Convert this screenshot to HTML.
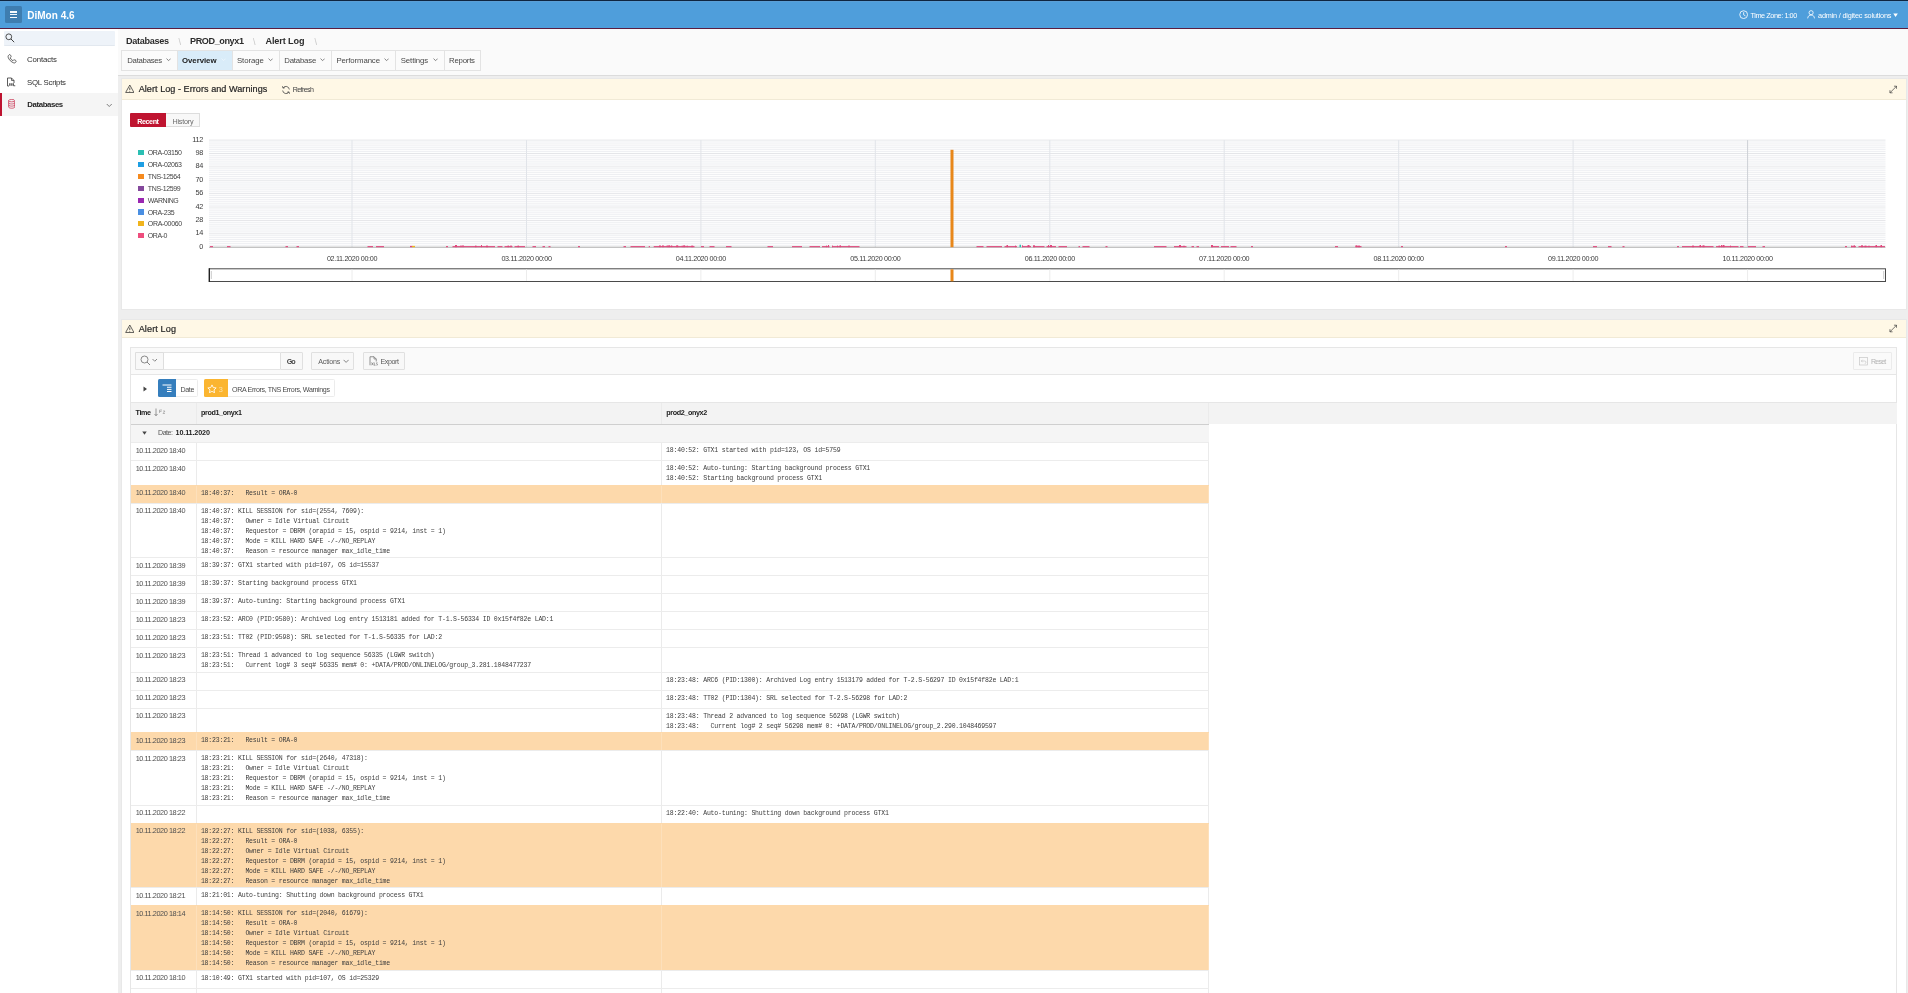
<!DOCTYPE html><html lang="en"><head><meta charset="utf-8"><title>DiMon 4.6 - Alert Log</title><style>
*{box-sizing:border-box;margin:0;padding:0}
html,body{width:1908px;height:993px;overflow:hidden;background:#eeeeee}
body{font-family:"Liberation Sans",sans-serif;font-size:8px;color:#404040;position:relative;will-change:transform}
.abs{position:absolute}
.t{position:absolute;white-space:nowrap;line-height:1}
#hdr{position:absolute;left:0;top:0;width:1908px;height:29px;background:#4f9edb;border-top:1px solid #0f2540;border-bottom:1px solid #5a1d40}
#hdr:before{content:'';position:absolute;left:0;top:0;width:100%;height:1px;background:#5b9fd6}
#burger{position:absolute;left:4.8px;top:4.8px;width:17.6px;height:17.6px;background:#3e7db0;border-radius:1.5px}
#burger i{position:absolute;left:5.2px;width:6.9px;height:1.5px;background:#f4f9fd}
#brand{left:27px;top:8.2px;font-size:10.6px;font-weight:bold;color:#fff;letter-spacing:-0.3px}
.hw{color:#fff;font-size:7.8px;top:9.6px;letter-spacing:-0.25px}
#side{position:absolute;left:0;top:28.5px;width:117.5px;height:965px;background:#fff}
#sbox{position:absolute;left:3.5px;top:2.5px;width:111.5px;height:14.5px;background:#eef3f9;border-radius:1px;border-bottom:1px solid #e2e8ef}
.nav{font-size:8.5px;color:#3a3a3a;letter-spacing:-0.35px}
#navsel{position:absolute;left:0;top:64.5px;width:117.5px;height:22.5px;background:#f5f5f5;border-left:2px solid #be1330}
#tbar{position:absolute;left:117.5px;top:28.5px;width:1791px;height:47.5px;background:#fafafa;border-bottom:1.5px solid #dcdcdc}
.bc{font-size:10.4px;font-weight:bold;color:#2c2c2c;top:36.2px;letter-spacing:-0.25px}
.bcs{font-size:9px;color:#c8c8c8;top:38px}
.tab{position:absolute;top:50px;height:21px;border:1px solid #e3e3e3;border-left:none;background:#fbfbfb;font-size:7.8px;color:#555;line-height:18.5px;padding-left:4.5px;white-space:nowrap;letter-spacing:-0.3px}
.tab.first{border-left:1px solid #e3e3e3}
.tab.act{background:#d9ecf9;color:#1a1a1a;font-weight:bold;letter-spacing:-0.35px}
.reg{position:absolute;left:120.6px;width:1786.5px;background:#fff;border:1px solid #e8e8e8}
.rh{position:absolute;left:0;top:0;width:100%;height:21px;background:#fff8e6;border-bottom:1px solid #f1ead6}
.rt{font-size:9.4px;color:#2e2e2e;top:5.2px;letter-spacing:-0.15px}
.btn{position:absolute;border:1px solid #e0e0e0;background:#f8f8f8;border-radius:1px;font-size:7.4px;color:#5a5a5a;white-space:nowrap;text-align:center}
.lg{font-size:6.9px;color:#4a4a4a;left:147.5px;letter-spacing:-0.15px}
.lgs{position:absolute;left:138.2px;width:5.4px;height:5.4px}
svg text{font-family:"Liberation Sans",sans-serif}
#irt{position:absolute;left:9px;top:28px;width:1766px;height:28px;background:#fafafa;border:1px solid #e6e6e6}
#irb{position:absolute;left:9px;top:55px;width:1766px;height:940px;background:#fff;border-left:1px solid #e6e6e6;border-right:1px solid #e6e6e6}
#th{position:absolute;left:10px;top:83.5px;width:1764px;height:21.5px;background:#f3f3f3;border-top:1px solid #e6e6e6;border-bottom:none}
.thc{font-size:7.4px;font-weight:bold;color:#222;top:7.2px;letter-spacing:-0.25px}
.vl{position:absolute;width:1px;background:#ebebeb}
#rows{position:absolute;left:10px;top:105px;width:1078.3px}
.row{position:relative;width:1078.3px;border-top:1px solid #ececec;background:#fff}
.row.hl{background:#fdd9ab;border-top-color:#fdd9ab}
.row.hl .vl{background:#fde0bb}
.row.grp{background:#f5f5f5;height:18px;border-top:1px solid #cfcfcf}
.tm{position:absolute;left:5px;top:5.2px;font-size:7.5px;color:#4a4a4a;letter-spacing:-0.42px;white-space:nowrap;line-height:1}
.c1,.c2{position:absolute;top:3.2px;font-family:"Liberation Mono",monospace;font-size:6.5px;letter-spacing:-0.192px;line-height:10.03px;color:#3c3c3c;white-space:pre}
.c1{left:70.4px}.c2{left:535.6px}
.h1{height:18px}.h2{height:24.5px}.h5{height:54.5px}.h6{height:64.5px}
</style></head><body>
<div id="hdr"><div id="burger"><i style="top:5.4px"></i><i style="top:8.1px"></i><i style="top:10.8px"></i></div>
<div id="f1" class="t" style="left:27.2px;top:10px;font-size:10.0px;letter-spacing:0.033px;font-weight:bold;color:#fff">DiMon 4.6</div>
<svg class="abs" style="left:1738.6px;top:8.8px" width="9.3" height="9.3" viewBox="0 0 10 10"><circle cx="5" cy="5" r="4.2" fill="none" stroke="#fff" stroke-width="0.9"/><path d="M5 2.4V5.2L6.9 6.3" fill="none" stroke="#fff" stroke-width="0.9"/></svg>
<div id="f2" class="t" style="left:1750.5px;top:11px;font-size:7.3px;letter-spacing:-0.434px;color:#fff">Time Zone: 1:00</div>
<svg class="abs" style="left:1806.7px;top:9.3px" width="8.200" height="9" viewBox="0 0 9 10"><circle cx="4.5" cy="3" r="2.3" fill="none" stroke="#fff" stroke-width="0.9"/><path d="M0.7 9.3C1 6.6 2.6 5.6 4.5 5.6S8 6.6 8.3 9.3" fill="none" stroke="#fff" stroke-width="0.9"/></svg>
<div id="f3" class="t" style="left:1818px;top:11px;font-size:7.3px;letter-spacing:-0.183px;color:#fff">admin / digitec solutions</div>
<svg class="abs" style="left:1893.2px;top:11.6px" width="5.500" height="4.700" viewBox="0 0 6 5"><path d="M0.3 0.5H5.3L2.8 4.2Z" fill="#fff"/></svg>
</div>
<div id="side"><div id="sbox"></div>
<svg class="abs" style="left:5.1px;top:4.7px" width="10" height="10" viewBox="0 0 10 10"><circle cx="3.8" cy="3.8" r="2.9" fill="none" stroke="#404040" stroke-width="0.9"/><path d="M5.9 5.9L9.2 9.2" stroke="#404040" stroke-width="1"/></svg>
<div id="navsel"></div>
<svg class="abs" style="left:6.5px;top:25.5px" width="10" height="10" viewBox="0 0 20 20"><path d="M4.2 1.6c1.2-.9 2.4-.3 3 .9l.9 2c.4 1 .1 1.8-.7 2.4l-1 .8c1 2.6 2.8 4.4 5.4 5.6l1-1.100c.7-.7 1.500-.9 2.400-.4l2 1c1.100.6 1.500 1.800.7 2.900l-.8 1.100c-.900 1.200-2.300 1.300-3.700.9C8.400 16 3.900 11.600 2.300 6.500 1.900 4.900 2.300 3.100 4.200 1.600z" fill="none" stroke="#404040" stroke-width="1.6"/></svg>
<div id="f4" class="t" style="left:27px;top:27.5px;font-size:7.8px;letter-spacing:-0.112px;color:#2e2e2e">Contacts</div>
<svg class="abs" style="left:5.7px;top:48px" width="10" height="10" viewBox="0 0 20 20"><path d="M3 18V2h8l5 5v5" fill="none" stroke="#404040" stroke-width="1.7"/><path d="M11 2v5h5" fill="none" stroke="#404040" stroke-width="1.5"/><path d="M3 18h3" stroke="#404040" stroke-width="1.7"/><rect x="6.500" y="12.500" width="2.500" height="5" fill="#404040"/><rect x="10.500" y="12.500" width="2.500" height="5" fill="#404040"/><path d="M15 12.500v5h3.500" fill="none" stroke="#404040" stroke-width="1.7"/></svg>
<div id="f5" class="t" style="left:27px;top:50.4px;font-size:7.8px;letter-spacing:-0.231px;color:#2e2e2e">SQL Scripts</div>
<svg class="abs" style="left:7.6px;top:70.6px" width="7.4" height="9.7" viewBox="0 0 16 21"><ellipse cx="8" cy="3.600" rx="6.600" ry="2.600" fill="none" stroke="#c2183a" stroke-width="1.400"/><path d="M1.400 3.600v13.800c0 1.400 3 2.600 6.600 2.600s6.600-1.200 6.600-2.600V3.600" fill="none" stroke="#c2183a" stroke-width="1.400"/><path d="M1.400 8.200c0 1.400 3 2.600 6.600 2.600s6.600-1.200 6.600-2.600M1.400 12.800c0 1.400 3 2.600 6.600 2.600s6.600-1.200 6.600-2.600" fill="none" stroke="#c2183a" stroke-width="1.400"/></svg>
<div id="f6" class="t" style="left:27.3px;top:72.7px;font-size:7.8px;letter-spacing:-0.389px;font-weight:bold;color:#1e1e1e">Databases</div>
<svg class="abs" style="left:105.5px;top:74px" width="6.500" height="4.500" viewBox="0 0 13 9"><path d="M1.500 2l5 5 5-5" fill="none" stroke="#555" stroke-width="1.500"/></svg>
</div>
<div id="tbar"></div>
<div id="f7" class="t" style="left:126px;top:36.9px;font-size:9.1px;letter-spacing:-0.312px;font-weight:bold;color:#2c2c2c">Databases</div>
<div id="f8" class="t" style="left:190px;top:36.9px;font-size:9.1px;letter-spacing:-0.403px;font-weight:bold;color:#2c2c2c">PROD_onyx1</div>
<div id="f9" class="t" style="left:265.5px;top:36.9px;font-size:9.1px;letter-spacing:-0.115px;font-weight:bold;color:#2c2c2c">Alert Log</div>
<div class="t bcs" style="left:178.5px">\</div>
<div class="t bcs" style="left:253px">\</div>
<div class="t bcs" style="left:314.5px">\</div>
<div class="tab first" style="left:121px;width:57px">
<div id="f10" class="t" style="left:5.25px;top:6.1px;font-size:7.8px;letter-spacing:-0.285px;color:#484848">Databases</div>
<svg class="abs" style="right:6.200px;top:7.200px" width="5.200" height="3.600" viewBox="0 0 10 7"><path d="M1 1.200l4 4 4-4" fill="none" stroke="#6a6a6a" stroke-width="1.600"/></svg>
</div>
<div class="tab act" style="left:178px;width:55px">
<div id="f11" class="t" style="left:4px;top:6.1px;font-size:7.8px;letter-spacing:-0.027px;font-weight:bold;color:#1a1a1a">Overview</div>
<svg class="abs" style="right:6.200px;top:7.200px" width="5.200" height="3.600" viewBox="0 0 10 7"><path d="M1 1.200l4 4 4-4" fill="none" stroke="#eef6fc" stroke-width="1.600"/></svg>
</div>
<div class="tab" style="left:233px;width:47px">
<div id="f12" class="t" style="left:4px;top:6.1px;font-size:7.8px;letter-spacing:-0.094px;color:#484848">Storage</div>
<svg class="abs" style="right:6.200px;top:7.200px" width="5.200" height="3.600" viewBox="0 0 10 7"><path d="M1 1.200l4 4 4-4" fill="none" stroke="#6a6a6a" stroke-width="1.600"/></svg>
</div>
<div class="tab" style="left:280px;width:52px">
<div id="f13" class="t" style="left:4.25px;top:6.1px;font-size:7.8px;letter-spacing:-0.199px;color:#484848">Database</div>
<svg class="abs" style="right:6.200px;top:7.200px" width="5.200" height="3.600" viewBox="0 0 10 7"><path d="M1 1.200l4 4 4-4" fill="none" stroke="#6a6a6a" stroke-width="1.600"/></svg>
</div>
<div class="tab" style="left:332px;width:64px">
<div id="f14" class="t" style="left:4.5px;top:6.1px;font-size:7.8px;letter-spacing:-0.114px;color:#484848">Performance</div>
<svg class="abs" style="right:6.200px;top:7.200px" width="5.200" height="3.600" viewBox="0 0 10 7"><path d="M1 1.200l4 4 4-4" fill="none" stroke="#6a6a6a" stroke-width="1.600"/></svg>
</div>
<div class="tab" style="left:396px;width:49px">
<div id="f15" class="t" style="left:4.75px;top:6.1px;font-size:7.8px;letter-spacing:-0.098px;color:#484848">Settings</div>
<svg class="abs" style="right:6.200px;top:7.200px" width="5.200" height="3.600" viewBox="0 0 10 7"><path d="M1 1.200l4 4 4-4" fill="none" stroke="#6a6a6a" stroke-width="1.600"/></svg>
</div>
<div class="tab" style="left:445px;width:36px">
<div id="f16" class="t" style="left:4px;top:6.1px;font-size:7.8px;letter-spacing:-0.219px;color:#484848">Reports</div>
</div>
<div class="reg" style="top:78px;height:232px"><div class="rh"></div></div>
<svg class="abs" style="left:124.8px;top:84.4px" width="9.600" height="9.600" viewBox="0 0 19 19"><path d="M9.500 2L17.700 16.800H1.300z" fill="none" stroke="#333" stroke-width="1.500" stroke-linejoin="round"/><path d="M9.500 7v5" stroke="#333" stroke-width="1.600"/><circle cx="9.500" cy="14.200" r="0.950" fill="#333"/></svg>
<div id="f17" class="t" style="left:138.7px;top:84.9px;font-size:9.1px;letter-spacing:0.036px;color:#262626;-webkit-text-stroke:0.2px #262626">Alert Log - Errors and Warnings</div>
<svg class="abs" style="left:280.600px;top:84.500px" width="10" height="10" viewBox="0 0 19 19"><path d="M15.800 8.500A6.500 6.500 0 0 0 4 5.500" fill="none" stroke="#444" stroke-width="1.500"/><path d="M3.200 10.500A6.500 6.500 0 0 0 15 13.500" fill="none" stroke="#444" stroke-width="1.500"/><path d="M2.800 2.200L3.700 6l3.800-.9M16.200 16.800L15.300 13l-3.800.9" fill="none" stroke="#444" stroke-width="1.400"/></svg>
<div id="f18" class="t" style="left:292.7px;top:87.1px;font-size:7.1px;letter-spacing:-0.607px;color:#444">Refresh</div>
<svg class="abs" style="left:1888.800px;top:84.7px" width="8.500" height="9" viewBox="0 0 18 18"><path d="M2 16L16 2M10.500 2H16v5.500M7.500 16H2v-5.500" fill="none" stroke="#333" stroke-width="1.400"/></svg>
<div class="abs" style="left:130px;top:113px;width:36px;height:14px;background:#bf1430;border-radius:1px 0 0 1px"></div>
<div id="f19" class="t" style="left:137.3px;top:117.5px;font-size:7.2px;letter-spacing:-0.454px;font-weight:bold;color:#fff">Recent</div>
<div class="abs" style="left:166px;top:113px;width:34px;height:14px;background:#f8f8f8;border:1px solid #dddddd;border-left:none"></div>
<div id="f20" class="t" style="left:172.5px;top:117.5px;font-size:7.2px;letter-spacing:-0.229px;color:#6a6a6a">History</div>
<div class="lgs" style="top:150.1px;background:#2bbfb3"></div>
<div id="f21" class="t" style="left:147.75px;top:149.2px;font-size:7.0px;letter-spacing:-0.340px;color:#444">ORA-03150</div>
<div class="lgs" style="top:162.1px;background:#1d9ee3"></div>
<div id="f22" class="t" style="left:147.75px;top:161.2px;font-size:7.0px;letter-spacing:-0.340px;color:#444">ORA-02063</div>
<div class="lgs" style="top:174.1px;background:#f58a1e"></div>
<div id="f23" class="t" style="left:147.75px;top:173.2px;font-size:7.0px;letter-spacing:-0.350px;color:#444">TNS-12564</div>
<div class="lgs" style="top:185.79999999999998px;background:#84489c"></div>
<div id="f24" class="t" style="left:147.75px;top:184.89999999999998px;font-size:7.0px;letter-spacing:-0.350px;color:#444">TNS-12599</div>
<div class="lgs" style="top:197.6px;background:#9a27b1"></div>
<div id="f25" class="t" style="left:147.75px;top:196.7px;font-size:7.0px;letter-spacing:-0.430px;color:#444">WARNING</div>
<div class="lgs" style="top:209.4px;background:#4a8fe2"></div>
<div id="f26" class="t" style="left:147.75px;top:208.5px;font-size:7.0px;letter-spacing:-0.365px;color:#444">ORA-235</div>
<div class="lgs" style="top:221.1px;background:#f0b41d"></div>
<div id="f27" class="t" style="left:147.75px;top:220.2px;font-size:7.0px;letter-spacing:-0.309px;color:#444">ORA-00060</div>
<div class="lgs" style="top:233.1px;background:#ee4d7d"></div>
<div id="f28" class="t" style="left:147.75px;top:232.2px;font-size:7.0px;letter-spacing:-0.427px;color:#444">ORA-0</div>
<svg class="abs" style="left:0;top:100px" width="1908" height="200" viewBox="0 100 1908 200"><line x1="209.0" x2="1885.5" y1="140.10" y2="140.10" stroke="#e5e6e9" stroke-width="1"/><line x1="209.0" x2="1885.5" y1="142.01" y2="142.01" stroke="#edeef1" stroke-width="0.95"/><line x1="209.0" x2="1885.5" y1="143.92" y2="143.92" stroke="#edeef1" stroke-width="0.95"/><line x1="209.0" x2="1885.5" y1="145.84" y2="145.84" stroke="#edeef1" stroke-width="0.95"/><line x1="209.0" x2="1885.5" y1="147.75" y2="147.75" stroke="#edeef1" stroke-width="0.95"/><line x1="209.0" x2="1885.5" y1="149.66" y2="149.66" stroke="#edeef1" stroke-width="0.95"/><line x1="209.0" x2="1885.5" y1="151.57" y2="151.57" stroke="#edeef1" stroke-width="0.95"/><line x1="209.0" x2="1885.5" y1="153.49" y2="153.49" stroke="#e5e6e9" stroke-width="1"/><line x1="209.0" x2="1885.5" y1="155.40" y2="155.40" stroke="#edeef1" stroke-width="0.95"/><line x1="209.0" x2="1885.5" y1="157.31" y2="157.31" stroke="#edeef1" stroke-width="0.95"/><line x1="209.0" x2="1885.5" y1="159.22" y2="159.22" stroke="#edeef1" stroke-width="0.95"/><line x1="209.0" x2="1885.5" y1="161.14" y2="161.14" stroke="#edeef1" stroke-width="0.95"/><line x1="209.0" x2="1885.5" y1="163.05" y2="163.05" stroke="#edeef1" stroke-width="0.95"/><line x1="209.0" x2="1885.5" y1="164.96" y2="164.96" stroke="#edeef1" stroke-width="0.95"/><line x1="209.0" x2="1885.5" y1="166.88" y2="166.88" stroke="#e5e6e9" stroke-width="1"/><line x1="209.0" x2="1885.5" y1="168.79" y2="168.79" stroke="#edeef1" stroke-width="0.95"/><line x1="209.0" x2="1885.5" y1="170.70" y2="170.70" stroke="#edeef1" stroke-width="0.95"/><line x1="209.0" x2="1885.5" y1="172.61" y2="172.61" stroke="#edeef1" stroke-width="0.95"/><line x1="209.0" x2="1885.5" y1="174.52" y2="174.52" stroke="#edeef1" stroke-width="0.95"/><line x1="209.0" x2="1885.5" y1="176.44" y2="176.44" stroke="#edeef1" stroke-width="0.95"/><line x1="209.0" x2="1885.5" y1="178.35" y2="178.35" stroke="#edeef1" stroke-width="0.95"/><line x1="209.0" x2="1885.5" y1="180.26" y2="180.26" stroke="#e5e6e9" stroke-width="1"/><line x1="209.0" x2="1885.5" y1="182.17" y2="182.17" stroke="#edeef1" stroke-width="0.95"/><line x1="209.0" x2="1885.5" y1="184.09" y2="184.09" stroke="#edeef1" stroke-width="0.95"/><line x1="209.0" x2="1885.5" y1="186.00" y2="186.00" stroke="#edeef1" stroke-width="0.95"/><line x1="209.0" x2="1885.5" y1="187.91" y2="187.91" stroke="#edeef1" stroke-width="0.95"/><line x1="209.0" x2="1885.5" y1="189.82" y2="189.82" stroke="#edeef1" stroke-width="0.95"/><line x1="209.0" x2="1885.5" y1="191.74" y2="191.74" stroke="#edeef1" stroke-width="0.95"/><line x1="209.0" x2="1885.5" y1="193.65" y2="193.65" stroke="#e5e6e9" stroke-width="1"/><line x1="209.0" x2="1885.5" y1="195.56" y2="195.56" stroke="#edeef1" stroke-width="0.95"/><line x1="209.0" x2="1885.5" y1="197.47" y2="197.47" stroke="#edeef1" stroke-width="0.95"/><line x1="209.0" x2="1885.5" y1="199.39" y2="199.39" stroke="#edeef1" stroke-width="0.95"/><line x1="209.0" x2="1885.5" y1="201.30" y2="201.30" stroke="#edeef1" stroke-width="0.95"/><line x1="209.0" x2="1885.5" y1="203.21" y2="203.21" stroke="#edeef1" stroke-width="0.95"/><line x1="209.0" x2="1885.5" y1="205.12" y2="205.12" stroke="#edeef1" stroke-width="0.95"/><line x1="209.0" x2="1885.5" y1="207.04" y2="207.04" stroke="#e5e6e9" stroke-width="1"/><line x1="209.0" x2="1885.5" y1="208.95" y2="208.95" stroke="#edeef1" stroke-width="0.95"/><line x1="209.0" x2="1885.5" y1="210.86" y2="210.86" stroke="#edeef1" stroke-width="0.95"/><line x1="209.0" x2="1885.5" y1="212.77" y2="212.77" stroke="#edeef1" stroke-width="0.95"/><line x1="209.0" x2="1885.5" y1="214.69" y2="214.69" stroke="#edeef1" stroke-width="0.95"/><line x1="209.0" x2="1885.5" y1="216.60" y2="216.60" stroke="#edeef1" stroke-width="0.95"/><line x1="209.0" x2="1885.5" y1="218.51" y2="218.51" stroke="#edeef1" stroke-width="0.95"/><line x1="209.0" x2="1885.5" y1="220.43" y2="220.43" stroke="#e5e6e9" stroke-width="1"/><line x1="209.0" x2="1885.5" y1="222.34" y2="222.34" stroke="#edeef1" stroke-width="0.95"/><line x1="209.0" x2="1885.5" y1="224.25" y2="224.25" stroke="#edeef1" stroke-width="0.95"/><line x1="209.0" x2="1885.5" y1="226.16" y2="226.16" stroke="#edeef1" stroke-width="0.95"/><line x1="209.0" x2="1885.5" y1="228.07" y2="228.07" stroke="#edeef1" stroke-width="0.95"/><line x1="209.0" x2="1885.5" y1="229.99" y2="229.99" stroke="#edeef1" stroke-width="0.95"/><line x1="209.0" x2="1885.5" y1="231.90" y2="231.90" stroke="#edeef1" stroke-width="0.95"/><line x1="209.0" x2="1885.5" y1="233.81" y2="233.81" stroke="#e5e6e9" stroke-width="1"/><line x1="209.0" x2="1885.5" y1="235.72" y2="235.72" stroke="#edeef1" stroke-width="0.95"/><line x1="209.0" x2="1885.5" y1="237.64" y2="237.64" stroke="#edeef1" stroke-width="0.95"/><line x1="209.0" x2="1885.5" y1="239.55" y2="239.55" stroke="#edeef1" stroke-width="0.95"/><line x1="209.0" x2="1885.5" y1="241.46" y2="241.46" stroke="#edeef1" stroke-width="0.95"/><line x1="209.0" x2="1885.5" y1="243.38" y2="243.38" stroke="#edeef1" stroke-width="0.95"/><line x1="209.0" x2="1885.5" y1="245.29" y2="245.29" stroke="#edeef1" stroke-width="0.95"/><line x1="352.0" x2="352.0" y1="140.1" y2="247.2" stroke="#e1e4e9" stroke-width="1"/><line x1="526.5" x2="526.5" y1="140.1" y2="247.2" stroke="#e1e4e9" stroke-width="1"/><line x1="700.9" x2="700.9" y1="140.1" y2="247.2" stroke="#e1e4e9" stroke-width="1"/><line x1="875.3" x2="875.3" y1="140.1" y2="247.2" stroke="#e1e4e9" stroke-width="1"/><line x1="1049.8" x2="1049.8" y1="140.1" y2="247.2" stroke="#e1e4e9" stroke-width="1"/><line x1="1224.2" x2="1224.2" y1="140.1" y2="247.2" stroke="#e1e4e9" stroke-width="1"/><line x1="1398.7" x2="1398.7" y1="140.1" y2="247.2" stroke="#e1e4e9" stroke-width="1"/><line x1="1573.1" x2="1573.1" y1="140.1" y2="247.2" stroke="#e1e4e9" stroke-width="1"/><line x1="1747.6" x2="1747.6" y1="140.1" y2="247.2" stroke="#cdd0d5" stroke-width="1"/><line x1="209.0" x2="1885.5" y1="247.2" y2="247.2" stroke="#a9a9a9" stroke-width="1"/><text x="203.200" y="141.6" text-anchor="end" font-size="7.300" fill="#3c3c3c" letter-spacing="-0.200">112</text><text x="203.200" y="155.0" text-anchor="end" font-size="7.300" fill="#3c3c3c" letter-spacing="-0.200">98</text><text x="203.200" y="168.4" text-anchor="end" font-size="7.300" fill="#3c3c3c" letter-spacing="-0.200">84</text><text x="203.200" y="181.8" text-anchor="end" font-size="7.300" fill="#3c3c3c" letter-spacing="-0.200">70</text><text x="203.200" y="195.1" text-anchor="end" font-size="7.300" fill="#3c3c3c" letter-spacing="-0.200">56</text><text x="203.200" y="208.5" text-anchor="end" font-size="7.300" fill="#3c3c3c" letter-spacing="-0.200">42</text><text x="203.200" y="221.9" text-anchor="end" font-size="7.300" fill="#3c3c3c" letter-spacing="-0.200">28</text><text x="203.200" y="235.3" text-anchor="end" font-size="7.300" fill="#3c3c3c" letter-spacing="-0.200">14</text><text x="203.200" y="248.7" text-anchor="end" font-size="7.300" fill="#3c3c3c" letter-spacing="-0.200">0</text><text x="352.0" y="260.500" text-anchor="middle" font-size="7.200" fill="#3c3c3c" letter-spacing="-0.330">02.11.2020 00:00</text><text x="526.5" y="260.500" text-anchor="middle" font-size="7.200" fill="#3c3c3c" letter-spacing="-0.330">03.11.2020 00:00</text><text x="700.9" y="260.500" text-anchor="middle" font-size="7.200" fill="#3c3c3c" letter-spacing="-0.330">04.11.2020 00:00</text><text x="875.3" y="260.500" text-anchor="middle" font-size="7.200" fill="#3c3c3c" letter-spacing="-0.330">05.11.2020 00:00</text><text x="1049.8" y="260.500" text-anchor="middle" font-size="7.200" fill="#3c3c3c" letter-spacing="-0.330">06.11.2020 00:00</text><text x="1224.2" y="260.500" text-anchor="middle" font-size="7.200" fill="#3c3c3c" letter-spacing="-0.330">07.11.2020 00:00</text><text x="1398.7" y="260.500" text-anchor="middle" font-size="7.200" fill="#3c3c3c" letter-spacing="-0.330">08.11.2020 00:00</text><text x="1573.1" y="260.500" text-anchor="middle" font-size="7.200" fill="#3c3c3c" letter-spacing="-0.330">09.11.2020 00:00</text><text x="1747.6" y="260.500" text-anchor="middle" font-size="7.200" fill="#3c3c3c" letter-spacing="-0.330">10.11.2020 00:00</text><rect x="210" y="246.10" width="3.0" height="1.100" fill="#e0487c"/><rect x="227" y="246.10" width="3.5" height="1.100" fill="#e0487c"/><rect x="285.5" y="246.10" width="2.5" height="1.100" fill="#e0487c"/><rect x="296.5" y="246.10" width="2.5" height="1.100" fill="#e0487c"/><rect x="367.5" y="246.10" width="5.5" height="1.100" fill="#e0487c"/><rect x="376" y="246.10" width="8.0" height="1.100" fill="#e0487c"/><rect x="446" y="246.10" width="2.0" height="1.100" fill="#e0487c"/><rect x="452.5" y="246.10" width="42.5" height="1.100" fill="#e0487c"/><rect x="455.0" y="245.00" width="2" height="2.2" fill="#e0487c"/><rect x="460.5" y="245.30" width="1" height="1.9" fill="#e0487c"/><rect x="462.5" y="245.00" width="1" height="2.2" fill="#e0487c"/><rect x="475.0" y="245.60" width="1.5" height="1.6" fill="#e0487c"/><rect x="481.0" y="245.00" width="1" height="2.2" fill="#e0487c"/><rect x="486.0" y="245.60" width="2" height="1.6" fill="#e0487c"/><rect x="497.5" y="246.10" width="5.0" height="1.100" fill="#e0487c"/><rect x="504.5" y="246.10" width="8.0" height="1.100" fill="#e0487c"/><rect x="507.5" y="245.60" width="1.5" height="1.6" fill="#e0487c"/><rect x="510.5" y="245.30" width="1" height="1.9" fill="#e0487c"/><rect x="514.5" y="246.10" width="10.5" height="1.100" fill="#e0487c"/><rect x="517.5" y="245.60" width="1.5" height="1.6" fill="#e0487c"/><rect x="532.5" y="246.10" width="3.5" height="1.100" fill="#e0487c"/><rect x="542.5" y="246.10" width="2.5" height="1.100" fill="#e0487c"/><rect x="548.5" y="246.10" width="2.0" height="1.100" fill="#e0487c"/><rect x="578" y="246.10" width="2.0" height="1.100" fill="#e0487c"/><rect x="623.5" y="246.10" width="2.5" height="1.100" fill="#e0487c"/><rect x="630.5" y="246.10" width="14.5" height="1.100" fill="#e0487c"/><rect x="648.7" y="246.10" width="1.3" height="1.100" fill="#e0487c"/><rect x="653.7" y="246.10" width="40.8" height="1.100" fill="#e0487c"/><rect x="659.2" y="245.30" width="1.5" height="1.9" fill="#e0487c"/><rect x="662.2" y="245.30" width="1.5" height="1.9" fill="#e0487c"/><rect x="666.7" y="245.30" width="1" height="1.9" fill="#e0487c"/><rect x="668.2" y="245.30" width="2" height="1.9" fill="#e0487c"/><rect x="671.2" y="245.30" width="1" height="1.9" fill="#e0487c"/><rect x="676.2" y="245.30" width="2" height="1.9" fill="#e0487c"/><rect x="681.7" y="245.60" width="1" height="1.6" fill="#e0487c"/><rect x="683.2" y="245.30" width="2" height="1.9" fill="#e0487c"/><rect x="686.7" y="245.60" width="1" height="1.6" fill="#e0487c"/><rect x="691.2" y="245.60" width="2" height="1.6" fill="#e0487c"/><rect x="701" y="246.10" width="3.0" height="1.100" fill="#e0487c"/><rect x="709.5" y="246.10" width="5.0" height="1.100" fill="#e0487c"/><rect x="726" y="246.10" width="5.5" height="1.100" fill="#e0487c"/><rect x="767.5" y="246.10" width="5.5" height="1.100" fill="#e0487c"/><rect x="792" y="246.10" width="10.0" height="1.100" fill="#e0487c"/><rect x="809.5" y="246.10" width="10.5" height="1.100" fill="#e0487c"/><rect x="822" y="246.10" width="7.5" height="1.100" fill="#e0487c"/><rect x="826.0" y="245.60" width="1" height="1.6" fill="#e0487c"/><rect x="828.0" y="245.00" width="1" height="2.2" fill="#e0487c"/><rect x="832" y="246.10" width="27.5" height="1.100" fill="#e0487c"/><rect x="832.0" y="245.60" width="1" height="1.6" fill="#e0487c"/><rect x="837.0" y="245.60" width="1" height="1.6" fill="#e0487c"/><rect x="839.5" y="245.30" width="1.5" height="1.9" fill="#e0487c"/><rect x="848.5" y="245.30" width="1" height="1.9" fill="#e0487c"/><rect x="976.5" y="246.10" width="7.0" height="1.100" fill="#e0487c"/><rect x="986.5" y="246.10" width="15.5" height="1.100" fill="#e0487c"/><rect x="1004.5" y="246.10" width="12.5" height="1.100" fill="#e0487c"/><rect x="1006.5" y="245.00" width="1.5" height="2.2" fill="#e0487c"/><rect x="1015.0" y="245.60" width="1" height="1.6" fill="#e0487c"/><rect x="1022" y="246.10" width="9.0" height="1.100" fill="#e0487c"/><rect x="1022.0" y="245.30" width="1" height="1.9" fill="#e0487c"/><rect x="1027.5" y="245.00" width="2" height="2.2" fill="#e0487c"/><rect x="1033" y="246.10" width="11.5" height="1.100" fill="#e0487c"/><rect x="1033.0" y="245.30" width="2" height="1.9" fill="#e0487c"/><rect x="1046.5" y="246.10" width="9.5" height="1.100" fill="#e0487c"/><rect x="1048.0" y="245.00" width="1" height="2.2" fill="#e0487c"/><rect x="1050.0" y="245.00" width="2" height="2.2" fill="#e0487c"/><rect x="1058.5" y="246.10" width="8.5" height="1.100" fill="#e0487c"/><rect x="1078.5" y="246.10" width="1.5" height="1.100" fill="#e0487c"/><rect x="1082.5" y="246.10" width="7.0" height="1.100" fill="#e0487c"/><rect x="1105.5" y="246.10" width="2.0" height="1.100" fill="#e0487c"/><rect x="1154" y="246.10" width="12.5" height="1.100" fill="#e0487c"/><rect x="1174" y="246.10" width="12.5" height="1.100" fill="#e0487c"/><rect x="1179.0" y="245.00" width="2" height="2.2" fill="#e0487c"/><rect x="1183.5" y="245.60" width="1" height="1.6" fill="#e0487c"/><rect x="1191.5" y="246.10" width="2.5" height="1.100" fill="#e0487c"/><rect x="1196.5" y="246.10" width="2.5" height="1.100" fill="#e0487c"/><rect x="1211" y="246.10" width="8.0" height="1.100" fill="#e0487c"/><rect x="1211.0" y="245.00" width="2" height="2.2" fill="#e0487c"/><rect x="1221" y="246.10" width="8.0" height="1.100" fill="#e0487c"/><rect x="1230.5" y="246.10" width="6.0" height="1.100" fill="#e0487c"/><rect x="1251" y="246.10" width="2.0" height="1.100" fill="#e0487c"/><rect x="1335" y="246.10" width="3.0" height="1.100" fill="#e0487c"/><rect x="1355.5" y="246.10" width="6.0" height="1.100" fill="#e0487c"/><rect x="1355.5" y="245.30" width="2" height="1.9" fill="#e0487c"/><rect x="1358.0" y="245.60" width="2" height="1.6" fill="#e0487c"/><rect x="1401" y="246.10" width="2.0" height="1.100" fill="#e0487c"/><rect x="1505" y="246.10" width="2.0" height="1.100" fill="#e0487c"/><rect x="1593" y="246.10" width="4.0" height="1.100" fill="#e0487c"/><rect x="1608" y="246.10" width="3.5" height="1.100" fill="#e0487c"/><rect x="1622.5" y="246.10" width="2.0" height="1.100" fill="#e0487c"/><rect x="1677" y="246.10" width="2.0" height="1.100" fill="#e0487c"/><rect x="1682" y="246.10" width="31.5" height="1.100" fill="#e0487c"/><rect x="1692.0" y="245.60" width="2" height="1.6" fill="#e0487c"/><rect x="1699.5" y="245.00" width="1.5" height="2.2" fill="#e0487c"/><rect x="1702.5" y="245.30" width="2" height="1.9" fill="#e0487c"/><rect x="1716" y="246.10" width="22.5" height="1.100" fill="#e0487c"/><rect x="1718.5" y="245.60" width="1.5" height="1.6" fill="#e0487c"/><rect x="1721.0" y="245.00" width="1.5" height="2.2" fill="#e0487c"/><rect x="1723.0" y="245.00" width="1.5" height="2.2" fill="#e0487c"/><rect x="1730.0" y="245.60" width="1" height="1.6" fill="#e0487c"/><rect x="1740" y="246.10" width="3.5" height="1.100" fill="#e0487c"/><rect x="1748" y="246.10" width="8.0" height="1.100" fill="#e0487c"/><rect x="1762.5" y="246.10" width="2.5" height="1.100" fill="#e0487c"/><rect x="1845" y="246.10" width="2.0" height="1.100" fill="#e0487c"/><rect x="1851" y="246.10" width="5.0" height="1.100" fill="#e0487c"/><rect x="1851.0" y="245.60" width="1.5" height="1.6" fill="#e0487c"/><rect x="1853.5" y="245.30" width="1.5" height="1.9" fill="#e0487c"/><rect x="1858.5" y="246.10" width="26.5" height="1.100" fill="#e0487c"/><rect x="1861.0" y="245.30" width="2" height="1.9" fill="#e0487c"/><rect x="1864.5" y="245.60" width="2" height="1.6" fill="#e0487c"/><rect x="1868.5" y="245.60" width="1" height="1.6" fill="#e0487c"/><rect x="1875.5" y="245.00" width="1.5" height="2.2" fill="#e0487c"/><rect x="1880.5" y="245.00" width="1.5" height="2.2" fill="#e0487c"/><rect x="410" y="245.89999999999998" width="2.500" height="1.300" fill="#e0487c"/><rect x="412" y="245.89999999999998" width="3" height="1.300" fill="#f0b41d"/><rect x="1019.500" y="244.7" width="1.500" height="2.500" fill="#2bbfb3"/><rect x="950.500" y="149.800" width="3" height="97.4" fill="#e8871a"/><rect x="209.500" y="268.800" width="1676" height="12.700" fill="#fff" stroke="#4a4a4a" stroke-width="1"/><line x1="209.300" x2="209.300" y1="268.300" y2="282" stroke="#222" stroke-width="1.400"/><line x1="352.0" x2="352.0" y1="269.500" y2="280.800" stroke="#ececec" stroke-width="1"/><line x1="526.5" x2="526.5" y1="269.500" y2="280.800" stroke="#ececec" stroke-width="1"/><line x1="700.9" x2="700.9" y1="269.500" y2="280.800" stroke="#ececec" stroke-width="1"/><line x1="875.3" x2="875.3" y1="269.500" y2="280.800" stroke="#ececec" stroke-width="1"/><line x1="1049.8" x2="1049.8" y1="269.500" y2="280.800" stroke="#ececec" stroke-width="1"/><line x1="1224.2" x2="1224.2" y1="269.500" y2="280.800" stroke="#ececec" stroke-width="1"/><line x1="1398.7" x2="1398.7" y1="269.500" y2="280.800" stroke="#ececec" stroke-width="1"/><line x1="1573.1" x2="1573.1" y1="269.500" y2="280.800" stroke="#ececec" stroke-width="1"/><line x1="1747.6" x2="1747.6" y1="269.500" y2="280.800" stroke="#ececec" stroke-width="1"/><rect x="950.500" y="269.300" width="3" height="12" fill="#e8871a"/><line x1="211.300" x2="211.300" y1="271" y2="279" stroke="#bbb" stroke-width="0.800"/><line x1="1883.700" x2="1883.700" y1="271" y2="279" stroke="#bbb" stroke-width="0.800"/></svg>
<div class="reg" style="top:318.5px;height:700px"><div class="rh" style="height:18.600px"></div></div>
<svg class="abs" style="left:124.8px;top:323.6px" width="9.600" height="9.600" viewBox="0 0 19 19"><path d="M9.500 2L17.700 16.800H1.300z" fill="none" stroke="#333" stroke-width="1.500" stroke-linejoin="round"/><path d="M9.500 7v5" stroke="#333" stroke-width="1.600"/><circle cx="9.500" cy="14.200" r="0.950" fill="#333"/></svg>
<div id="f29" class="t" style="left:138.7px;top:324.7px;font-size:9.1px;letter-spacing:0.112px;color:#262626;-webkit-text-stroke:0.2px #262626">Alert Log</div>
<svg class="abs" style="left:1888.800px;top:323.7px" width="8.500" height="9" viewBox="0 0 18 18"><path d="M2 16L16 2M10.500 2H16v5.500M7.500 16H2v-5.500" fill="none" stroke="#333" stroke-width="1.400"/></svg>
<div id="irt" style="left:130.200px;top:347px;width:1767.3px;height:28px"></div>
<div id="irb" style="left:130.200px;top:375px;width:1767.3px;height:640px"></div>
<div class="abs" style="left:135px;top:352.100px;width:146px;height:17.700px;background:#fff;border:1px solid #e4e4e4;border-radius:1px"></div>
<div class="abs" style="left:135px;top:352.100px;width:28.800px;height:17.700px;background:#f8f8f8;border:1px solid #dedede;border-radius:1px 0 0 1px"></div>
<svg class="abs" style="left:139.800px;top:355px" width="19" height="11" viewBox="0 0 38 22"><circle cx="9" cy="9" r="7" fill="none" stroke="#666" stroke-width="1.500"/><path d="M14 14l6 6" stroke="#666" stroke-width="1.600"/><path d="M25 8l4.500 4.500L34 8" fill="none" stroke="#666" stroke-width="1.500"/></svg>
<div class="btn" style="left:280px;top:352.100px;width:22.500px;height:17.700px;line-height:16px;font-weight:bold;color:#444;letter-spacing:-0.200px"></div>
<div id="f30" class="t" style="left:286.8px;top:357.6px;font-size:7.2px;letter-spacing:-1.184px;font-weight:bold;color:#444">Go</div>
<div class="btn" style="left:311px;top:352.100px;width:42.500px;height:17.700px;line-height:16px;text-align:left;padding-left:6.500px;letter-spacing:-0.350px"><svg class="abs" style="left:30.800px;top:5.700px" width="6.200" height="4.500" viewBox="0 0 11 8"><path d="M1 1.500l4.500 4.500L10 1.500" fill="none" stroke="#666" stroke-width="1.400"/></svg></div>
<div id="f31" class="t" style="left:318.3px;top:359.1px;font-size:7.1px;letter-spacing:-0.211px;color:#5a5a5a">Actions</div>
<div class="btn" style="left:363.200px;top:352.100px;width:42.300px;height:17.700px;line-height:16px;text-align:left;padding-left:16.500px;letter-spacing:-0.350px"><svg class="abs" style="left:5px;top:2.700px" width="9" height="10" viewBox="0 0 18 20"><path d="M2 18.500V1.500h8l4.500 4.500v5" fill="none" stroke="#666" stroke-width="1.400"/><path d="M10 1.500v4.500h4.500" fill="none" stroke="#666" stroke-width="1.200"/><path d="M5 13l3.500 5.500M8.500 13L5 18.500M10.500 13v5.500h2.500M17 13.500c-2.500-1-3 1.500-1 2.200s1.500 3.500-1.500 2.300" fill="none" stroke="#666" stroke-width="1.200"/></svg></div>
<div id="f32" class="t" style="left:380.5px;top:359.1px;font-size:7.1px;letter-spacing:-0.403px;color:#5a5a5a">Export</div>
<div class="btn" style="left:1853px;top:352.300px;width:38.500px;height:17.500px;line-height:16px;text-align:left;padding-left:17px;color:#c4c4c4;border-color:#ebebeb;background:#fafafa;letter-spacing:-0.350px"><svg class="abs" style="left:5px;top:4px" width="9" height="8.500" viewBox="0 0 18 17"><rect x="1" y="1" width="16" height="15" fill="none" stroke="#c4c4c4" stroke-width="1.300"/><path d="M4.500 8h7a2.500 2.500 0 0 1 0 5M7 5.500L4.500 8 7 10.500" fill="none" stroke="#c4c4c4" stroke-width="1.300"/></svg></div>
<div id="f33" class="t" style="left:1870.9px;top:359.1px;font-size:7.1px;letter-spacing:-0.783px;color:#b4b4b4">Reset</div>
<svg class="abs" style="left:142.700px;top:385.500px" width="4.500" height="6" viewBox="0 0 9 12"><path d="M1 1l7 5-7 5z" fill="#444"/></svg>
<div class="abs" style="left:158px;top:379.200px;width:40.200px;height:18px;border:1px solid #ececec;border-radius:1.500px;background:#fff"></div>
<div class="abs" style="left:158px;top:379.200px;width:18px;height:18px;background:#357ebd;border-radius:1.500px 0 0 1.500px"></div>
<svg class="abs" style="left:162px;top:384.300px" width="10" height="8.500" viewBox="0 0 20 17"><path d="M1 2h18M10 6.500h9M10 10.800h9M10 15h9" stroke="#fff" stroke-width="2"/></svg>
<div id="f34" class="t" style="left:180.6px;top:386.6px;font-size:7.1px;letter-spacing:-0.395px;color:#4a4a4a">Date</div>
<div class="abs" style="left:203.500px;top:379.200px;width:131px;height:18px;border:1px solid #ececec;border-radius:1.500px;background:#fff"></div>
<div class="abs" style="left:203.500px;top:379.200px;width:24px;height:18px;background:#fbb530;border-radius:1.500px 0 0 1.500px"></div>
<svg class="abs" style="left:206.500px;top:383.500px" width="10" height="9.500" viewBox="0 0 20 19"><path d="M10 1.800l2.500 5.300 5.800.7-4.300 4 1.100 5.700L10 14.700l-5.100 2.800L6 11.800l-4.300-4 5.800-.7z" fill="none" stroke="#fff" stroke-width="1.700" stroke-linejoin="round"/></svg>
<div class="t" style="left:218.700px;top:386.400px;font-size:7.300px;color:#fde2a8">3</div>
<div id="f35" class="t" style="left:232px;top:386.6px;font-size:7.1px;letter-spacing:-0.361px;color:#4a4a4a">ORA Errors, TNS Errors, Warnings</div>
<div id="th" style="left:130.500px;top:402px;width:1766.5px;height:22px"></div>
<div id="f36" class="t" style="left:135.5px;top:408.7px;font-size:7.2px;letter-spacing:-0.385px;font-weight:bold;color:#222">Time</div>
<svg class="abs" style="left:153.500px;top:407.500px" width="12" height="9" viewBox="0 0 24 18"><path d="M4 1v14M1 12l3 3.500L7 12" fill="none" stroke="#666" stroke-width="1.300"/><path d="M11 4h5M11 4v6M11 7h4M18 6h4l-4 5h4" fill="none" stroke="#888" stroke-width="1.100"/></svg>
<div id="f37" class="t" style="left:201px;top:408.7px;font-size:7.2px;letter-spacing:-0.375px;font-weight:bold;color:#222">prod1_onyx1</div>
<div id="f38" class="t" style="left:666.2px;top:408.7px;font-size:7.2px;letter-spacing:-0.375px;font-weight:bold;color:#222">prod2_onyx2</div>
<div class="vl" style="left:196px;top:403px;height:21px"></div>
<div class="vl" style="left:661px;top:403px;height:21px"></div>
<div class="vl" style="left:1208px;top:403px;height:21px"></div>
<div id="rows" style="left:130.500px;top:424px">
<div class="row grp"><svg class="abs" style="left:11.500px;top:6px" width="5" height="4" viewBox="0 0 10 8"><path d="M0.500 0.800h9L5 7.500z" fill="#444"/></svg><div id="f39" class="t" style="left:27.5px;top:5.4px;font-size:7.1px;letter-spacing:-0.492px;color:#555">Date:</div><div id="f40" class="t" style="left:45px;top:4.2px;font-size:7.2px;letter-spacing:-0.120px;font-weight:bold;color:#222">10.11.2020</div></div>
<div class="row h1"><div id="f41" class="t" style="left:5.2px;top:3.9px;font-size:7.3px;letter-spacing:-0.432px;color:#505050">10.11.2020 18:40</div>
<div class="c2">18:40:52: GTX1 started with pid=123, OS id=5759</div>
<div class="vl" style="left:65.500px;top:0;height:100%"></div><div class="vl" style="left:530.500px;top:0;height:100%"></div><div class="vl" style="left:1077.800px;top:0;height:100%"></div></div>
<div class="row h2"><div id="f42" class="t" style="left:5.2px;top:3.9px;font-size:7.3px;letter-spacing:-0.432px;color:#505050">10.11.2020 18:40</div>
<div class="c2">18:40:52: Auto-tuning: Starting background process GTX1
18:40:52: Starting background process GTX1</div>
<div class="vl" style="left:65.500px;top:0;height:100%"></div><div class="vl" style="left:530.500px;top:0;height:100%"></div><div class="vl" style="left:1077.800px;top:0;height:100%"></div></div>
<div class="row h1 hl"><div id="f43" class="t" style="left:5.2px;top:3.9px;font-size:7.3px;letter-spacing:-0.432px;color:#505050">10.11.2020 18:40</div>
<div class="c1">18:40:37:   Result = ORA-0</div>
<div class="vl" style="left:65.500px;top:0;height:100%"></div><div class="vl" style="left:530.500px;top:0;height:100%"></div><div class="vl" style="left:1077.800px;top:0;height:100%"></div></div>
<div class="row h5"><div id="f44" class="t" style="left:5.2px;top:3.9px;font-size:7.3px;letter-spacing:-0.432px;color:#505050">10.11.2020 18:40</div>
<div class="c1">18:40:37: KILL SESSION for sid=(2554, 7609):
18:40:37:   Owner = Idle Virtual Circuit
18:40:37:   Requestor = DBRM (orapid = 15, ospid = 9214, inst = 1)
18:40:37:   Mode = KILL HARD SAFE -/-/NO_REPLAY
18:40:37:   Reason = resource manager max_idle_time</div>
<div class="vl" style="left:65.500px;top:0;height:100%"></div><div class="vl" style="left:530.500px;top:0;height:100%"></div><div class="vl" style="left:1077.800px;top:0;height:100%"></div></div>
<div class="row h1"><div id="f45" class="t" style="left:5.2px;top:3.9px;font-size:7.3px;letter-spacing:-0.432px;color:#505050">10.11.2020 18:39</div>
<div class="c1">18:39:37: GTX1 started with pid=107, OS id=15537</div>
<div class="vl" style="left:65.500px;top:0;height:100%"></div><div class="vl" style="left:530.500px;top:0;height:100%"></div><div class="vl" style="left:1077.800px;top:0;height:100%"></div></div>
<div class="row h1"><div id="f46" class="t" style="left:5.2px;top:3.9px;font-size:7.3px;letter-spacing:-0.432px;color:#505050">10.11.2020 18:39</div>
<div class="c1">18:39:37: Starting background process GTX1</div>
<div class="vl" style="left:65.500px;top:0;height:100%"></div><div class="vl" style="left:530.500px;top:0;height:100%"></div><div class="vl" style="left:1077.800px;top:0;height:100%"></div></div>
<div class="row h1"><div id="f47" class="t" style="left:5.2px;top:3.9px;font-size:7.3px;letter-spacing:-0.432px;color:#505050">10.11.2020 18:39</div>
<div class="c1">18:39:37: Auto-tuning: Starting background process GTX1</div>
<div class="vl" style="left:65.500px;top:0;height:100%"></div><div class="vl" style="left:530.500px;top:0;height:100%"></div><div class="vl" style="left:1077.800px;top:0;height:100%"></div></div>
<div class="row h1"><div id="f48" class="t" style="left:5.2px;top:3.9px;font-size:7.3px;letter-spacing:-0.432px;color:#505050">10.11.2020 18:23</div>
<div class="c1">18:23:52: ARC0 (PID:9580): Archived Log entry 1513181 added for T-1.S-56334 ID 0x15f4f82e LAD:1</div>
<div class="vl" style="left:65.500px;top:0;height:100%"></div><div class="vl" style="left:530.500px;top:0;height:100%"></div><div class="vl" style="left:1077.800px;top:0;height:100%"></div></div>
<div class="row h1"><div id="f49" class="t" style="left:5.2px;top:3.9px;font-size:7.3px;letter-spacing:-0.432px;color:#505050">10.11.2020 18:23</div>
<div class="c1">18:23:51: TT02 (PID:9598): SRL selected for T-1.S-56335 for LAD:2</div>
<div class="vl" style="left:65.500px;top:0;height:100%"></div><div class="vl" style="left:530.500px;top:0;height:100%"></div><div class="vl" style="left:1077.800px;top:0;height:100%"></div></div>
<div class="row h2"><div id="f50" class="t" style="left:5.2px;top:3.9px;font-size:7.3px;letter-spacing:-0.432px;color:#505050">10.11.2020 18:23</div>
<div class="c1">18:23:51: Thread 1 advanced to log sequence 56335 (LGWR switch)
18:23:51:   Current log# 3 seq# 56335 mem# 0: +DATA/PROD/ONLINELOG/group_3.281.1048477237</div>
<div class="vl" style="left:65.500px;top:0;height:100%"></div><div class="vl" style="left:530.500px;top:0;height:100%"></div><div class="vl" style="left:1077.800px;top:0;height:100%"></div></div>
<div class="row h1"><div id="f51" class="t" style="left:5.2px;top:3.9px;font-size:7.3px;letter-spacing:-0.432px;color:#505050">10.11.2020 18:23</div>
<div class="c2">18:23:48: ARC6 (PID:1300): Archived Log entry 1513179 added for T-2.S-56297 ID 0x15f4f82e LAD:1</div>
<div class="vl" style="left:65.500px;top:0;height:100%"></div><div class="vl" style="left:530.500px;top:0;height:100%"></div><div class="vl" style="left:1077.800px;top:0;height:100%"></div></div>
<div class="row h1"><div id="f52" class="t" style="left:5.2px;top:3.9px;font-size:7.3px;letter-spacing:-0.432px;color:#505050">10.11.2020 18:23</div>
<div class="c2">18:23:48: TT02 (PID:1304): SRL selected for T-2.S-56298 for LAD:2</div>
<div class="vl" style="left:65.500px;top:0;height:100%"></div><div class="vl" style="left:530.500px;top:0;height:100%"></div><div class="vl" style="left:1077.800px;top:0;height:100%"></div></div>
<div class="row h2"><div id="f53" class="t" style="left:5.2px;top:3.9px;font-size:7.3px;letter-spacing:-0.432px;color:#505050">10.11.2020 18:23</div>
<div class="c2">18:23:48: Thread 2 advanced to log sequence 56298 (LGWR switch)
18:23:48:   Current log# 2 seq# 56298 mem# 0: +DATA/PROD/ONLINELOG/group_2.290.1048469597</div>
<div class="vl" style="left:65.500px;top:0;height:100%"></div><div class="vl" style="left:530.500px;top:0;height:100%"></div><div class="vl" style="left:1077.800px;top:0;height:100%"></div></div>
<div class="row h1 hl"><div id="f54" class="t" style="left:5.2px;top:3.9px;font-size:7.3px;letter-spacing:-0.432px;color:#505050">10.11.2020 18:23</div>
<div class="c1">18:23:21:   Result = ORA-0</div>
<div class="vl" style="left:65.500px;top:0;height:100%"></div><div class="vl" style="left:530.500px;top:0;height:100%"></div><div class="vl" style="left:1077.800px;top:0;height:100%"></div></div>
<div class="row h5"><div id="f55" class="t" style="left:5.2px;top:3.9px;font-size:7.3px;letter-spacing:-0.432px;color:#505050">10.11.2020 18:23</div>
<div class="c1">18:23:21: KILL SESSION for sid=(2640, 47318):
18:23:21:   Owner = Idle Virtual Circuit
18:23:21:   Requestor = DBRM (orapid = 15, ospid = 9214, inst = 1)
18:23:21:   Mode = KILL HARD SAFE -/-/NO_REPLAY
18:23:21:   Reason = resource manager max_idle_time</div>
<div class="vl" style="left:65.500px;top:0;height:100%"></div><div class="vl" style="left:530.500px;top:0;height:100%"></div><div class="vl" style="left:1077.800px;top:0;height:100%"></div></div>
<div class="row h1"><div id="f56" class="t" style="left:5.2px;top:3.9px;font-size:7.3px;letter-spacing:-0.432px;color:#505050">10.11.2020 18:22</div>
<div class="c2">18:22:40: Auto-tuning: Shutting down background process GTX1</div>
<div class="vl" style="left:65.500px;top:0;height:100%"></div><div class="vl" style="left:530.500px;top:0;height:100%"></div><div class="vl" style="left:1077.800px;top:0;height:100%"></div></div>
<div class="row h6 hl"><div id="f57" class="t" style="left:5.2px;top:3.9px;font-size:7.3px;letter-spacing:-0.432px;color:#505050">10.11.2020 18:22</div>
<div class="c1">18:22:27: KILL SESSION for sid=(1038, 6355):
18:22:27:   Result = ORA-0
18:22:27:   Owner = Idle Virtual Circuit
18:22:27:   Requestor = DBRM (orapid = 15, ospid = 9214, inst = 1)
18:22:27:   Mode = KILL HARD SAFE -/-/NO_REPLAY
18:22:27:   Reason = resource manager max_idle_time</div>
<div class="vl" style="left:65.500px;top:0;height:100%"></div><div class="vl" style="left:530.500px;top:0;height:100%"></div><div class="vl" style="left:1077.800px;top:0;height:100%"></div></div>
<div class="row h1"><div id="f58" class="t" style="left:5.2px;top:3.9px;font-size:7.3px;letter-spacing:-0.432px;color:#505050">10.11.2020 18:21</div>
<div class="c1">18:21:01: Auto-tuning: Shutting down background process GTX1</div>
<div class="vl" style="left:65.500px;top:0;height:100%"></div><div class="vl" style="left:530.500px;top:0;height:100%"></div><div class="vl" style="left:1077.800px;top:0;height:100%"></div></div>
<div class="row h6 hl"><div id="f59" class="t" style="left:5.2px;top:3.9px;font-size:7.3px;letter-spacing:-0.432px;color:#505050">10.11.2020 18:14</div>
<div class="c1">18:14:50: KILL SESSION for sid=(2040, 61679):
18:14:50:   Result = ORA-0
18:14:50:   Owner = Idle Virtual Circuit
18:14:50:   Requestor = DBRM (orapid = 15, ospid = 9214, inst = 1)
18:14:50:   Mode = KILL HARD SAFE -/-/NO_REPLAY
18:14:50:   Reason = resource manager max_idle_time</div>
<div class="vl" style="left:65.500px;top:0;height:100%"></div><div class="vl" style="left:530.500px;top:0;height:100%"></div><div class="vl" style="left:1077.800px;top:0;height:100%"></div></div>
<div class="row h1"><div id="f60" class="t" style="left:5.2px;top:3.9px;font-size:7.3px;letter-spacing:-0.432px;color:#505050">10.11.2020 18:10</div>
<div class="c1">18:10:49: GTX1 started with pid=107, OS id=25329</div>
<div class="vl" style="left:65.500px;top:0;height:100%"></div><div class="vl" style="left:530.500px;top:0;height:100%"></div><div class="vl" style="left:1077.800px;top:0;height:100%"></div></div>
<div class="row h1"><div id="f61" class="t" style="left:5.2px;top:3.9px;font-size:7.3px;letter-spacing:-0.432px;color:#505050">10.11.2020 18:10</div>
<div class="c1">18:10:49: Starting background process GTX1</div>
<div class="vl" style="left:65.500px;top:0;height:100%"></div><div class="vl" style="left:530.500px;top:0;height:100%"></div><div class="vl" style="left:1077.800px;top:0;height:100%"></div></div>
</div>
</body></html>
